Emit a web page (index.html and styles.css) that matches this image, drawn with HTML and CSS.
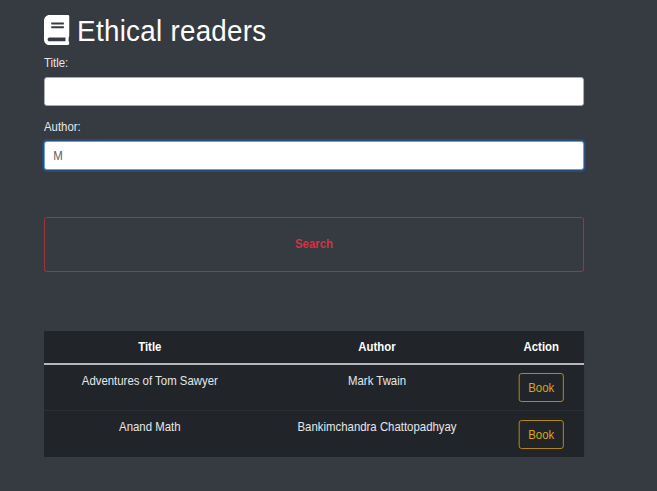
FILE: index.html
```html
<!DOCTYPE html>
<html lang="en">
<head>
<meta charset="utf-8">
<title>Ethical readers</title>
<link rel="stylesheet" href="styles.css">
</head>
<body>
<main class="container">
  <h1 class="brand">
    <svg class="brand-icon" viewBox="0 0 448 512" preserveAspectRatio="none" aria-hidden="true"><path fill="currentColor" d="M448 360V24c0-13.300-10.700-24-24-24H96C43 0 0 43 0 96v320c0 53 43 96 96 96h328c13.300 0 24-10.700 24-24v-16c0-7.500-3.500-14.300-8.900-18.700-4.200-15.400-4.200-59.300 0-74.700 5.400-4.300 8.900-11.100 8.900-18.600zM128 134c0-3.300 2.700-6 6-6h212c3.300 0 6 2.700 6 6v20c0 3.300-2.700 6-6 6H134c-3.300 0-6-2.700-6-6v-20zm0 64c0-3.300 2.700-6 6-6h212c3.300 0 6 2.700 6 6v20c0 3.300-2.700 6-6 6H134c-3.300 0-6-2.700-6-6v-20zm253.400 250H96c-17.700 0-32-14.300-32-32 0-17.600 14.400-32 32-32h285.400c-1.900 17.100-1.900 46.900 0 64z"/></svg>
    <span class="brand-name">Ethical readers</span>
  </h1>
  <form class="search">
    <label for="title">Title:</label>
    <input class="field" id="title" type="text">
    <label for="author">Author:</label>
    <input class="field field-active" id="author" type="text" value="M">
    <button class="search-button" type="button">Search</button>
  </form>
  <table class="results">
    <colgroup><col class="col-title"><col class="col-author"><col class="col-action"></colgroup>
    <thead>
      <tr><th>Title</th><th>Author</th><th>Action</th></tr>
    </thead>
    <tbody>
      <tr><td>Adventures of Tom Sawyer</td><td>Mark Twain</td><td><button class="book" type="button">Book</button></td></tr>
      <tr><td>Anand Math</td><td>Bankimchandra Chattopadhyay</td><td><button class="book" type="button">Book</button></td></tr>
    </tbody>
  </table>
</main>
</body>
</html>
```
FILE: styles.css
```css
* {
  box-sizing: border-box;
}

html {
  overflow: hidden;
}

body {
  margin: 0;
  min-height: 491px;
  background: #363a41;
  color: #e6e7e8;
  font: 12.4px/18px "Liberation Sans", Arial, sans-serif;
}

/* Slightly condensed column */
.container {
  width: 587px;
  margin-left: 44px;
  padding-top: 12px;
  transform: scaleX(0.92);
  transform-origin: 0 0;
}

.brand {
  display: flex;
  align-items: center;
  height: 36px;
  margin: 0 0 6px;
  color: #fff;
  font-size: 30.2px;
  font-weight: 400;
  letter-spacing: 0.3px;
  line-height: 37px;
}

.brand-icon {
  width: 27.5px;
  height: 30px;
  margin-right: 8.5px;
}

.search {
  display: flex;
  flex-direction: column;
}

.search label {
  margin-bottom: 5px;
}

.field {
  height: 29px;
  margin: 0 0 12px;
  padding: 0 9px;
  border: 1px solid #a5abb1;
  border-radius: 3px;
  outline: 0;
  background: #fff;
  color: #5b6167;
  font: inherit;
}

.field-active {
  border-color: #689bd8;
  box-shadow: 0 0 0 2px #284c77;
}

.search-button {
  height: 55px;
  margin-top: 35px;
  padding: 0 0 1px;
  border: 1px solid #a7353f;
  border-radius: 3px;
  background: transparent;
  color: #cf3545;
  font: bold 12.4px/18px "Liberation Sans", Arial, sans-serif;
}

.results {
  width: 587px;
  margin-top: 59px;
  border-spacing: 0;
  table-layout: fixed;
  background: linear-gradient(#b5b7bd, #b5b7bd) 0 32px / 100% 2px no-repeat #212529;
  text-align: center;
}

.col-title {
  width: 230px;
}

.col-author {
  width: 264px;
}

.results th {
  height: 34px;
  padding: 0 0 2px;
  color: #fff;
}

.results td {
  height: 45px;
  padding: 7px 0 0;
  vertical-align: top;
}

.results tr + tr td {
  height: 47px;
  border-top: 1px solid #2b2f34;
}

.book {
  display: block;
  width: 49px;
  height: 29px;
  margin: 1px auto 0;
  padding: 0;
  border: 1px solid #b98d10;
  border-radius: 3px;
  background: transparent;
  color: #d9a514;
  font: inherit;
}

.results tr + tr .book {
  margin-top: 2px;
}
```
